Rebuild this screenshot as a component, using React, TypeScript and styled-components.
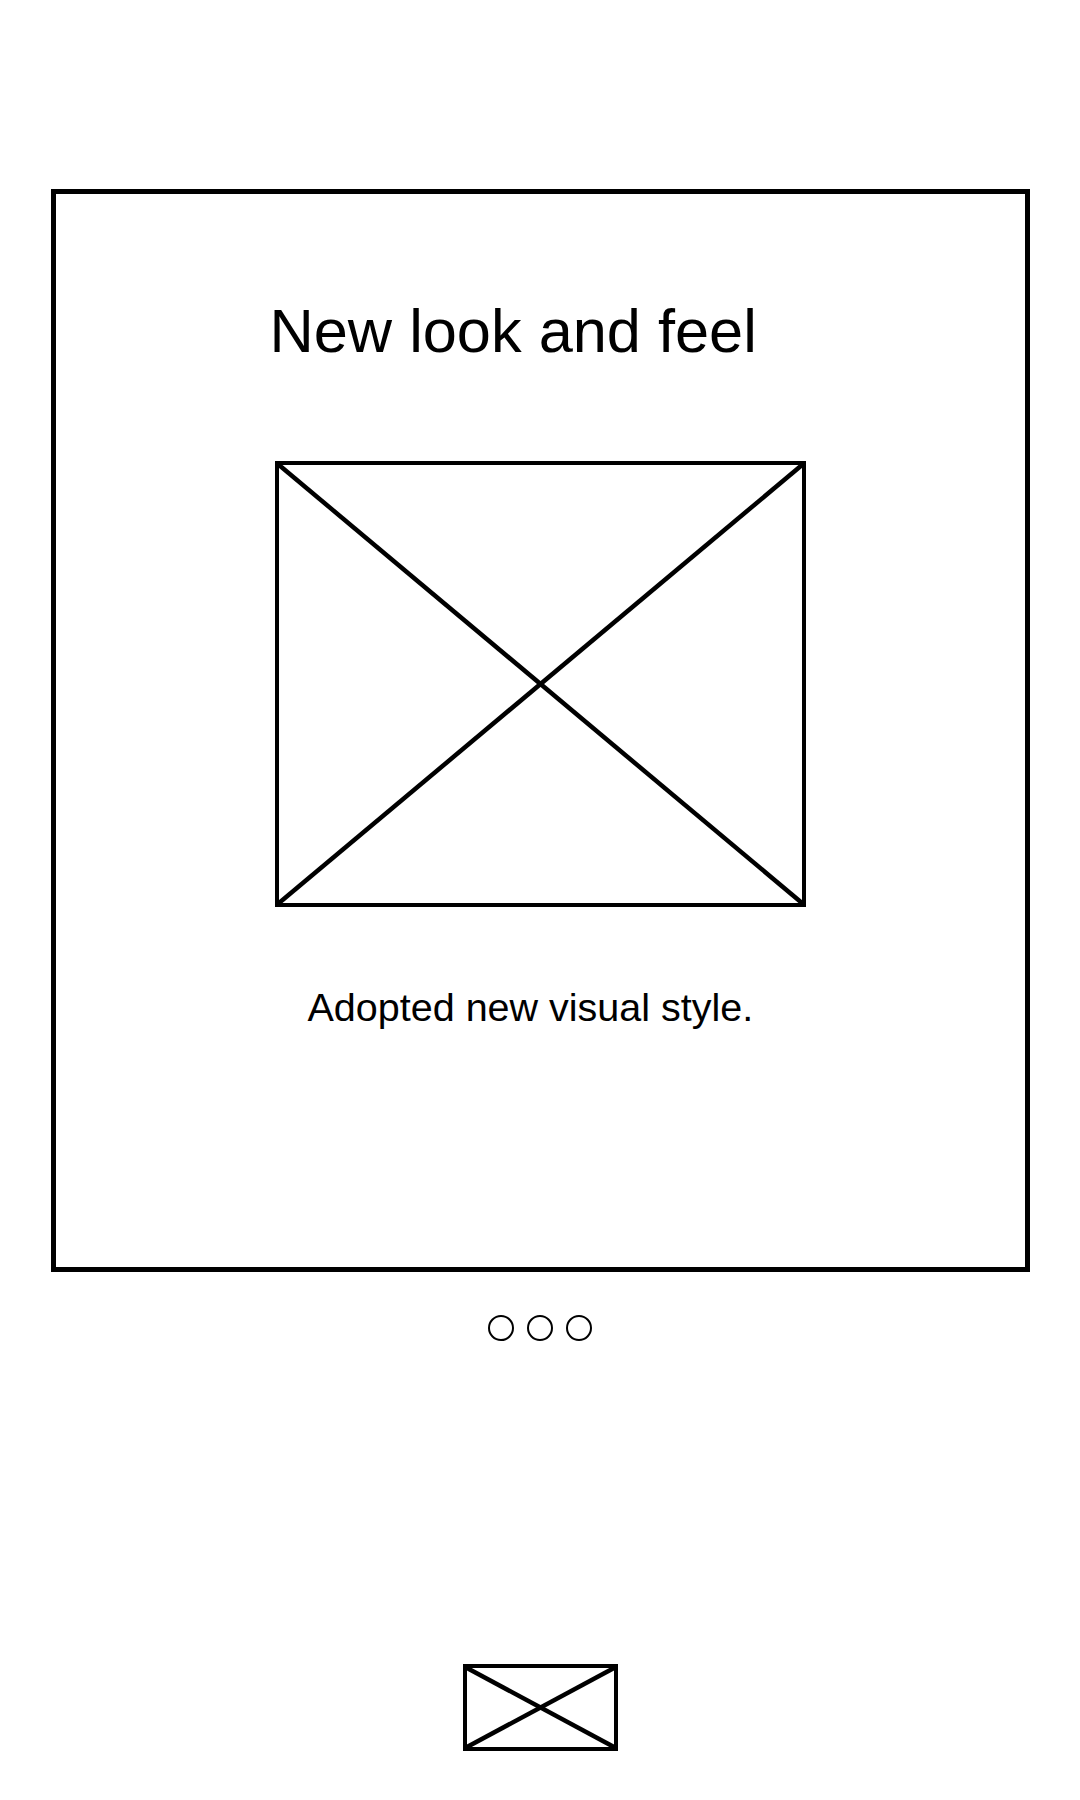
import React from 'react';
import styled, { createGlobalStyle } from 'styled-components';

const GlobalStyle = createGlobalStyle`
	html, body {
		margin: 0;
		padding: 0;
		background: #ffffff;
	}
	body {
		font-family: 'Liberation Sans', Arial, sans-serif;
		color: #000000;
	}
`;

type PlaceholderProps = {
	width: number;
	height: number;
	stroke?: number;
};

const Placeholder: React.FC<PlaceholderProps> = ({ width, height, stroke = 4 }) => (
	<Frame $width={width} $height={height} $stroke={stroke}>
		<svg width="100%" height="100%" preserveAspectRatio="none" viewBox="0 0 100 100">
			<line x1="0" y1="0" x2="100" y2="100" stroke="#000" strokeWidth={stroke + 0.5} vectorEffect="non-scaling-stroke" />
			<line x1="100" y1="0" x2="0" y2="100" stroke="#000" strokeWidth={stroke + 0.5} vectorEffect="non-scaling-stroke" />
		</svg>
	</Frame>
);

const App: React.FC = () => {
	const slides = [true, false, false];

	return (
		<>
			<GlobalStyle />
			<Page>
				<Card>
					<Title>New look and feel</Title>
					<ImageSlot>
						<Placeholder width={531} height={446} />
					</ImageSlot>
					<Caption>Adopted new visual style.</Caption>
				</Card>
				<Dots>
					{slides.map((active, i) => (
						<Dot key={i} $active={active} />
					))}
				</Dots>
				<Footer>
					<Placeholder width={155} height={87} />
				</Footer>
			</Page>
		</>
	);
};

const Page = styled.div`
	width: 1080px;
	height: 1800px;
	display: flex;
	flex-direction: column;
	align-items: center;
	padding-top: 189px;
	box-sizing: border-box;
`;

const Card = styled.div`
	width: 979px;
	height: 1083px;
	box-sizing: border-box;
	border: 5px solid #000;
	display: flex;
	flex-direction: column;
	align-items: flex-start;
`;

const Title = styled.h1`
	margin: 107px 0 0 214px;
	font-size: 61.3px;
	font-weight: 400;
	line-height: 1;
	white-space: nowrap;
`;

const ImageSlot = styled.div`
	align-self: center;
	margin-top: 99px;
`;

const Frame = styled.div<{ $width: number; $height: number; $stroke: number }>`
	width: ${(p) => p.$width}px;
	height: ${(p) => p.$height}px;
	box-sizing: border-box;
	border: ${(p) => p.$stroke}px solid #000;
	svg {
		display: block;
		overflow: visible;
	}
`;

const Caption = styled.p`
	margin: 81px 0 0 252px;
	font-size: 39.5px;
	line-height: 1;
	white-space: nowrap;
`;

const Dots = styled.div`
	display: flex;
	gap: 13px;
	margin-top: 43px;
`;

const Dot = styled.span<{ $active: boolean }>`
	width: 26px;
	height: 26px;
	box-sizing: border-box;
	border-radius: 50%;
	border: 2.5px solid #000;
	background: transparent;
`;

const Footer = styled.div`
	margin-top: 323px;
`;

export default App;
